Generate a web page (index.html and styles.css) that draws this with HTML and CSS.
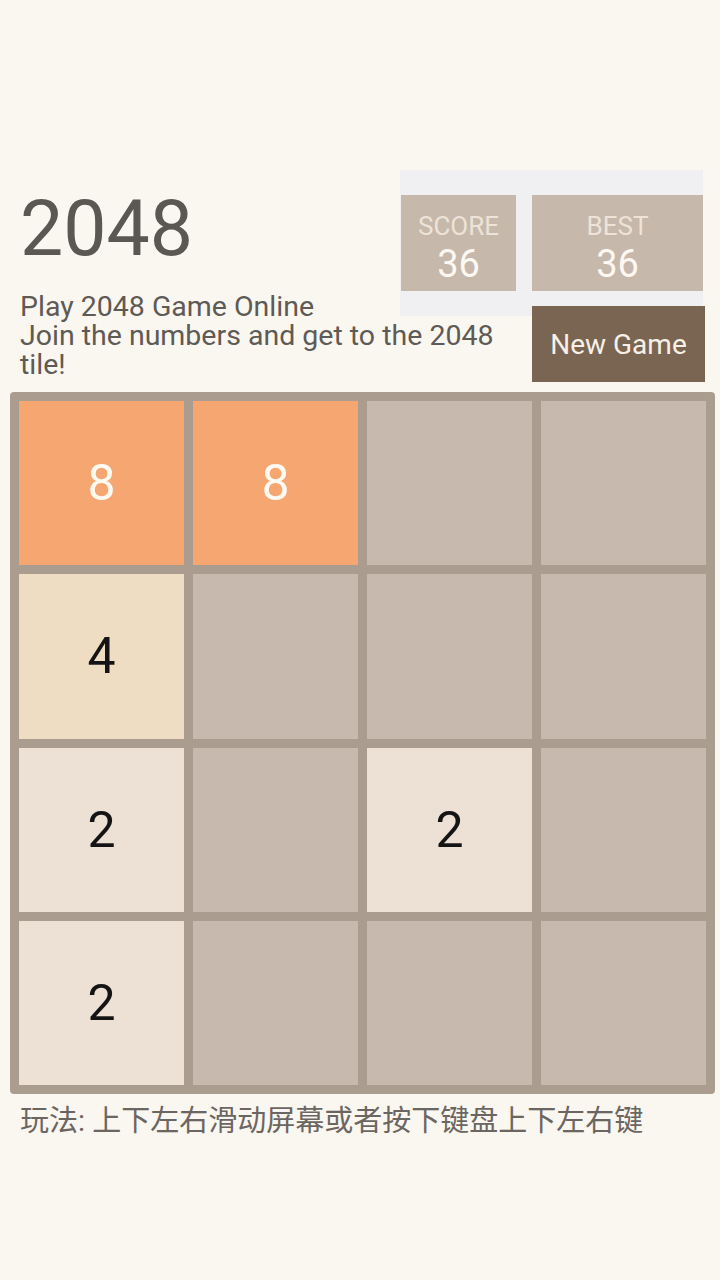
FILE: index.html
```html
<!DOCTYPE html>
<html lang="zh">
<head>
<meta charset="utf-8">
<title>2048</title>
<link rel="stylesheet" href="styles.css">
</head>
<body>
<div class="page">
  <header class="heading">
    <div class="scores">
      <div class="score-box score">
        <div class="score-label">SCORE</div>
        <div class="score-value">36</div>
      </div>
      <div class="score-box best">
        <div class="score-label">BEST</div>
        <div class="score-value">36</div>
      </div>
    </div>
    <h1 class="title">2048</h1>
    <button class="restart">New Game</button>
    <p class="intro">Play 2048 Game Online<br>Join the numbers and get to the 2048 tile!</p>
  </header>
  <div class="board">
    <div class="tile t8">8</div>
    <div class="tile t8">8</div>
    <div class="tile"></div>
    <div class="tile"></div>
    <div class="tile t4">4</div>
    <div class="tile"></div>
    <div class="tile"></div>
    <div class="tile"></div>
    <div class="tile t2">2</div>
    <div class="tile"></div>
    <div class="tile t2">2</div>
    <div class="tile"></div>
    <div class="tile t2">2</div>
    <div class="tile"></div>
    <div class="tile"></div>
    <div class="tile"></div>
  </div>
  <p class="howto">玩法: 上下左右滑动屏幕或者按下键盘上下左右键</p>
</div>
</body>
</html>
```
FILE: styles.css
```css
html, body {
  margin: 0;
  padding: 0;
  background: #faf6f0;
}
body {
  font-family: Roboto, "Noto Sans CJK SC", sans-serif;
  color: #5e5a55;
}
.page {
  padding: 170px 5px 0 10px;
}
.heading {
  padding: 0 0 0 10px;
  margin-right: 10px;
}
.heading::after {
  content: "";
  display: block;
  clear: both;
}
.scores {
  float: right;
  width: 303px;
  margin-right: 2px;
  box-sizing: border-box;
  background: #f0f0f2;
  padding: 25px 0 25px 1px;
  display: flex;
  gap: 16px;
}
.score-box {
  height: 96px;
  box-sizing: border-box;
  padding-top: 17px;
  background: #c6b8ab;
  display: flex;
  flex-direction: column;
  align-items: center;
}
.score { width: 115px; }
.best { flex: 1; }
.score-label {
  font-size: 26px;
  line-height: 28px;
  color: #ede3d8;
}
.score-value {
  margin-top: 4px;
  font-size: 38px;
  line-height: 40px;
  color: #fdf8f1;
}
.title {
  margin: 0;
  padding-top: 21px;
  font-size: 77px;
  line-height: 77px;
  font-weight: 400;
  color: #5b5752;
}
.restart {
  float: right;
  clear: right;
  margin: -10px 0 0 16px;
  width: 173px;
  height: 76px;
  border: 0;
  padding: 0;
  background: #7a6553;
  color: #f7f0e7;
  font-family: Roboto, sans-serif;
  font-size: 28px;
}
.intro {
  margin: 24px 0 0 0;
  font-size: 28.5px;
  line-height: 29px;
}
.board {
  margin-top: 10px;
  background: #aa9d90;
  border-radius: 4px;
  padding: 9px;
  display: grid;
  grid-template-columns: repeat(4, 1fr);
  grid-auto-rows: 164.25px;
  gap: 9px 9px;
}
.tile {
  background: #c7b9ad;
  display: flex;
  align-items: center;
  justify-content: center;
  font-size: 50px;
  color: #141414;
}
.t8 { background: #f5a671; color: #fffaf2; }
.t4 { background: #eeddc3; }
.t2 { background: #ede0d5; }
.howto {
  margin: 8px 0 0 10px;
  font-size: 29px;
  line-height: 38px;
  color: #6b6661;
}
```
